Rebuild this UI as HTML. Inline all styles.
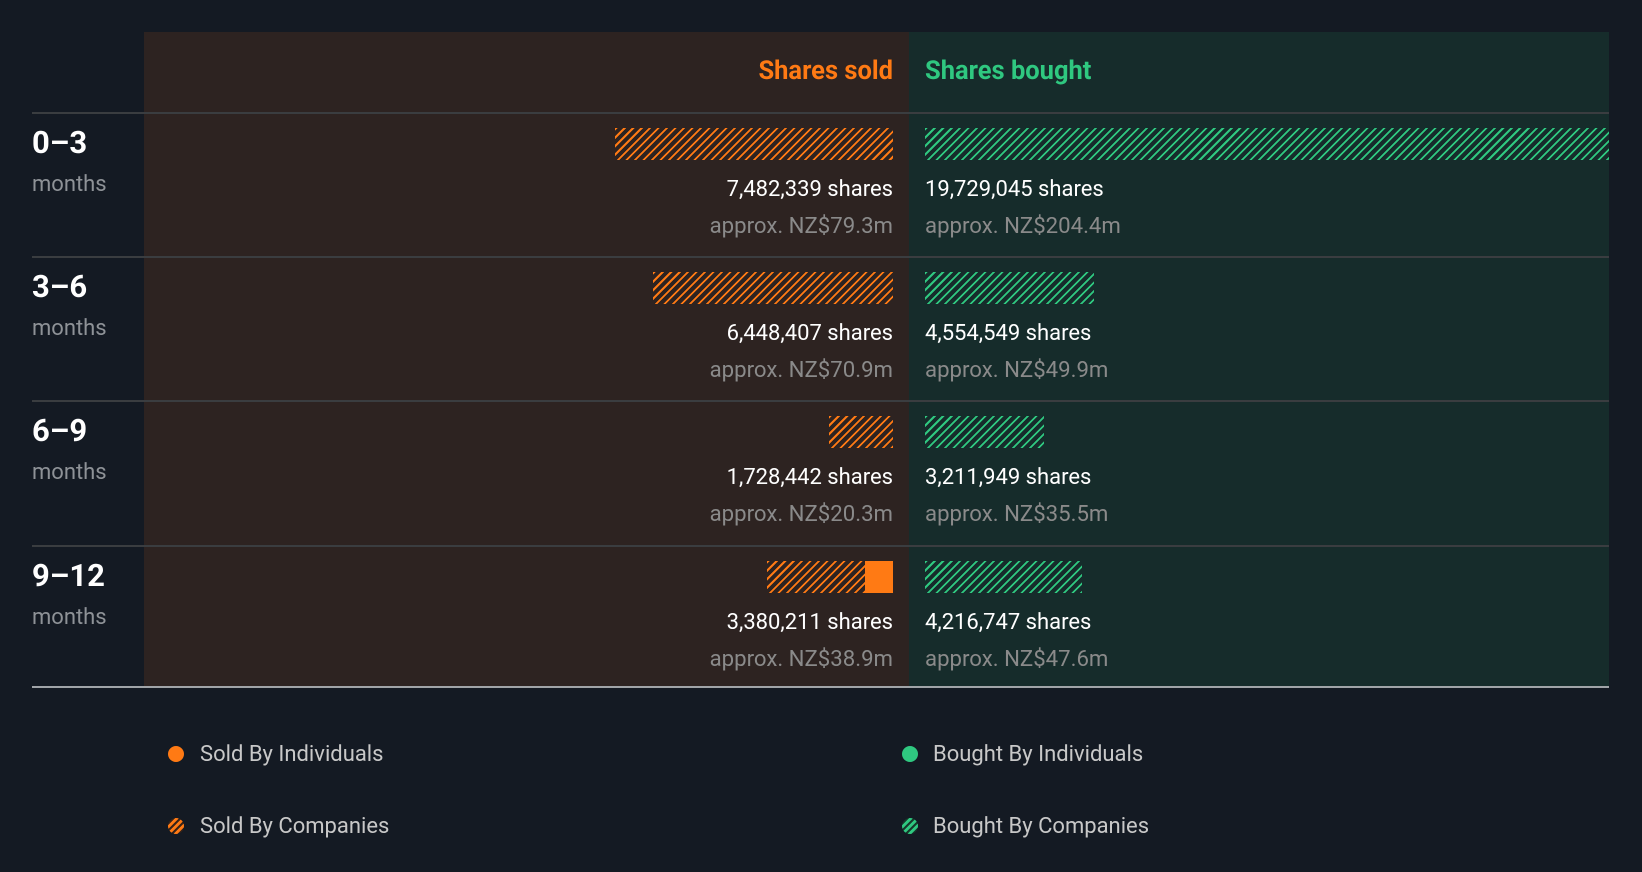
<!DOCTYPE html>
<html><head><meta charset="utf-8"><style>
*{margin:0;padding:0;box-sizing:border-box}
body{width:1642px;height:872px;background:#141a23;font-family:"Roboto","Liberation Sans",sans-serif;position:relative;overflow:hidden}
.abs{position:absolute}
.lp{left:144px;width:765px;top:32px;height:655px;background:#2d2321}
.rp{left:909px;width:700px;top:32px;height:655px;background:#162c2b}
.line{left:32px;width:1577px;height:2px;background:#3a3d40}
.h{font-weight:bold;font-size:25.5px;top:55px;line-height:32px}
.so{background:repeating-linear-gradient(135deg,#ff7a14 0 1.8px,transparent 1.8px 6px);height:32px}
.bo{background:repeating-linear-gradient(135deg,#2fc880 0 1.8px,transparent 1.8px 6px);height:32px}
.t{font-size:22px;color:#fff;line-height:24px;white-space:nowrap}
.a{font-size:22.2px;color:#8a8a8a;line-height:24px;white-space:nowrap}
.r{right:749px;text-align:right}
.lb{left:32px;font-weight:bold;font-size:31px;color:#fff;line-height:32px}
.m{left:32px;font-size:22px;color:#8e9297;line-height:24px}
.lg{font-size:22px;color:#c8c8c8;line-height:24px}
.dot{width:16px;height:16px;border-radius:50%}
</style></head><body>
<div class="abs lp"></div><div class="abs rp"></div>
<div class="abs h" style="right:749px;color:#ff7a14">Shares sold</div>
<div class="abs h" style="left:925px;color:#2fc880">Shares bought</div>

<div class="abs line" style="top:112px"></div>
<div class="abs line" style="top:256px"></div>
<div class="abs line" style="top:400px"></div>
<div class="abs line" style="top:545px"></div>
<div class="abs" style="left:32px;width:1577px;top:686px;height:2px;background:#a0a4a8"></div>

<!-- row1 -->
<div class="abs lb" style="top:127px">0–3</div><div class="abs m" style="top:173px">months</div>
<div class="abs so" style="left:615px;width:278px;top:128px"></div>
<div class="abs bo" style="left:925px;width:684px;top:128px"></div>
<div class="abs t r" style="top:178px">7,482,339 shares</div>
<div class="abs t" style="left:925px;top:178px">19,729,045 shares</div>
<div class="abs a r" style="top:214px">approx. NZ$79.3m</div>
<div class="abs a" style="left:925px;top:214px">approx. NZ$204.4m</div>
<!-- row2 -->
<div class="abs lb" style="top:271px">3–6</div><div class="abs m" style="top:317px">months</div>
<div class="abs so" style="left:653px;width:240px;top:272px"></div>
<div class="abs bo" style="left:925px;width:169px;top:272px"></div>
<div class="abs t r" style="top:322px">6,448,407 shares</div>
<div class="abs t" style="left:925px;top:322px">4,554,549 shares</div>
<div class="abs a r" style="top:358px">approx. NZ$70.9m</div>
<div class="abs a" style="left:925px;top:358px">approx. NZ$49.9m</div>
<!-- row3 -->
<div class="abs lb" style="top:415px">6–9</div><div class="abs m" style="top:461px">months</div>
<div class="abs so" style="left:829px;width:64px;top:416px"></div>
<div class="abs bo" style="left:925px;width:119px;top:416px"></div>
<div class="abs t r" style="top:466px">1,728,442 shares</div>
<div class="abs t" style="left:925px;top:466px">3,211,949 shares</div>
<div class="abs a r" style="top:502px">approx. NZ$20.3m</div>
<div class="abs a" style="left:925px;top:502px">approx. NZ$35.5m</div>
<!-- row4 -->
<div class="abs lb" style="top:560px">9–12</div><div class="abs m" style="top:606px">months</div>
<div class="abs so" style="left:767px;width:98px;top:561px"></div>
<div class="abs" style="left:865px;width:28px;top:561px;height:32px;background:#ff7a14"></div>
<div class="abs bo" style="left:925px;width:157px;top:561px"></div>
<div class="abs t r" style="top:611px">3,380,211 shares</div>
<div class="abs t" style="left:925px;top:611px">4,216,747 shares</div>
<div class="abs a r" style="top:647px">approx. NZ$38.9m</div>
<div class="abs a" style="left:925px;top:647px">approx. NZ$47.6m</div>

<!-- legend -->
<div class="abs dot" style="left:168px;top:746px;background:#ff7a14"></div>
<div class="abs lg" style="left:200px;top:743px">Sold By Individuals</div>
<div class="abs dot" style="left:902px;top:746px;background:#2fc880"></div>
<div class="abs lg" style="left:933px;top:743px">Bought By Individuals</div>
<div class="abs dot" style="left:168px;top:818px;background:repeating-linear-gradient(135deg,#ff7a14 0 3px,#3a2418 3px 5px)"></div>
<div class="abs lg" style="left:200px;top:815px">Sold By Companies</div>
<div class="abs dot" style="left:902px;top:818px;background:repeating-linear-gradient(135deg,#2fc880 0 3px,#163a2c 3px 5px)"></div>
<div class="abs lg" style="left:933px;top:815px">Bought By Companies</div>
</body></html>
